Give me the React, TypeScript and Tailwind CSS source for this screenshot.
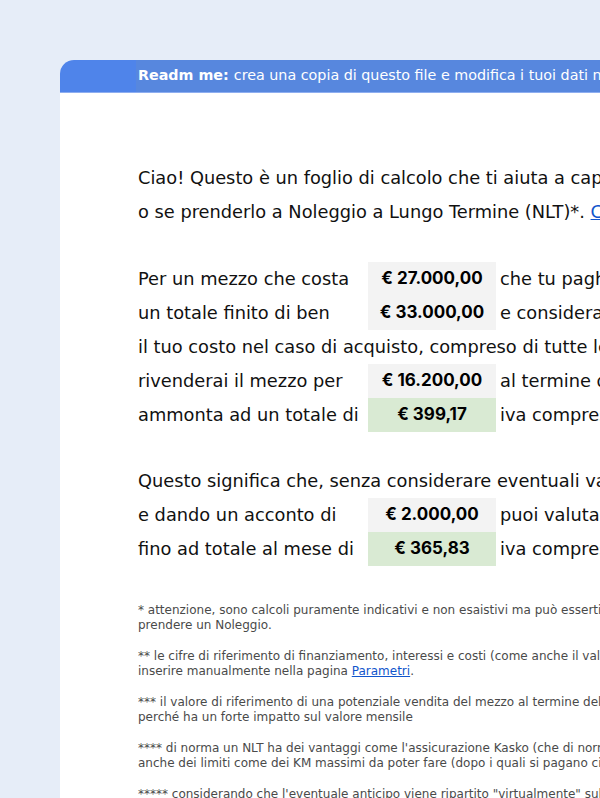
import React from "react";

const font = { fontFamily: "'DejaVu Sans', 'Open Sans', sans-serif" };
const numFont = { fontFamily: "Inter, 'Liberation Sans', sans-serif" };

function ValueRow({
  label,
  value,
  after,
  green,
}: {
  label: string;
  value?: string;
  after: string;
  green?: boolean;
}) {
  return (
    <div className="flex h-[34px] items-center whitespace-nowrap">
      <div className="w-[230px] shrink-0">{label}</div>
      <div
        className={`flex h-full w-[128px] shrink-0 items-center justify-center text-[17px] font-bold text-black ${
          green ? "bg-[#d9ead3]" : "bg-[#f3f3f3]"
        }`}
        style={numFont}
      >
        {value}
      </div>
      <div className="pl-[4px]">{after}</div>
    </div>
  );
}

const notes = [
  [
    "* attenzione, sono calcoli puramente indicativi e non esaistivi ma può esserti utile per capire se ti conviene comprare o",
    "prendere un Noleggio.",
  ],
  [
    "** le cifre di riferimento di finanziamento, interessi e costi (come anche il valore di rivendita) sono da",
    "inserire manualmente nella pagina ",
  ],
  [
    "*** il valore di riferimento di una potenziale vendita del mezzo al termine del finanziamento è molto importante",
    "perché ha un forte impatto sul valore mensile",
  ],
  [
    "**** di norma un NLT ha dei vantaggi come l'assicurazione Kasko (che di norma è inclusa nel canone) ma ha",
    "anche dei limiti come dei KM massimi da poter fare (dopo i quali si pagano cifre extra)",
  ],
  [
    "***** considerando che l'eventuale anticipo viene ripartito \"virtualmente\" sul totale delle rate",
    "",
  ],
];

export default function App() {
  return (
    <div
      className="h-[798px] w-[600px] overflow-hidden bg-[#e6edf8] pl-[60px] pt-[60px]"
      style={font}
    >
      <div className="h-[800px] w-[900px] overflow-hidden rounded-tl-[14px] bg-white">
        <div className="flex h-[33px] border-b border-[#8eaef0] text-[14.3px] text-white">
          <div className="w-[76px] bg-[#4f84ea]" />
          <div className="flex flex-1 items-center whitespace-nowrap bg-[#5787de] pl-[2px]">
            <span className="font-bold">Readm me:</span>
            <span className="ml-[5px]">
              crea una copia di questo file e modifica i tuoi dati nella pagina Parametri
            </span>
          </div>
        </div>

        <div className="pl-[78px] pt-[68px] text-[17.8px] text-[#111]">
          <div className="flex h-[34px] items-center whitespace-nowrap">
            Ciao! Questo è un foglio di calcolo che ti aiuta a capire se ti conviene comprare un mezzo
          </div>
          <div className="flex h-[34px] items-center whitespace-nowrap">
            o se prenderlo a Noleggio a Lungo Termine (NLT)*.&nbsp;
            <span className="text-[#1155cc] underline">Clicca qui</span>
          </div>
          <div className="h-[33px]" />
          <ValueRow label="Per un mezzo che costa" value="€ 27.000,00" after="che tu paghi a rate per un" />
          <ValueRow label="un totale finito di ben" value="€ 33.000,00" after="e considerando" />
          <div className="flex h-[34px] items-center whitespace-nowrap">
            il tuo costo nel caso di acquisto, compreso di tutte le spese
          </div>
          <ValueRow label="rivenderai il mezzo per" value="€ 16.200,00" after="al termine del finanziamento" />
          <ValueRow label="ammonta ad un totale di" value="€ 399,17" after="iva compresa" green />
          <div className="h-[32px]" />
          <div className="flex h-[34px] items-center whitespace-nowrap">
            Questo significa che, senza considerare eventuali vantaggi
          </div>
          <ValueRow label="e dando un acconto di" value="€ 2.000,00" after="puoi valutare un NLT" />
          <ValueRow label="fino ad totale al mese di" value="€ 365,83" after="iva compresa" green />

          <div className="flex flex-col gap-[16px] pt-[37px] text-[12px] leading-[15px] text-[#4a4a4a]">
            {notes.map((n, i) => (
              <div key={i} className="whitespace-nowrap">
                <div>{n[0]}</div>
                <div>
                  {n[1]}
                  {i === 1 && (
                    <>
                      <span className="text-[#1155cc] underline">Parametri</span>.
                    </>
                  )}
                </div>
              </div>
            ))}
          </div>
        </div>
      </div>
    </div>
  );
}
